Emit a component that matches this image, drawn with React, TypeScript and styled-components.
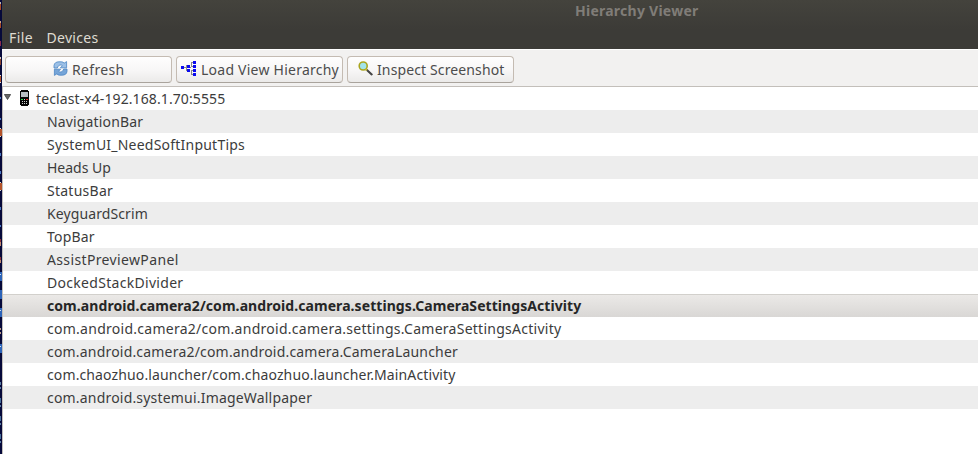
import React from "react";
import styled, { createGlobalStyle } from "styled-components";

const GlobalStyle = createGlobalStyle`
  * { box-sizing: border-box; }
  body {
    margin: 0;
    overflow: hidden;
    font: 14px "Noto Sans", sans-serif;
    color: #3c3c3c;
  }
`;

const Desktop = styled.div`
  display: flex;
  width: 978px;
  height: 454px;
  background: #fff;
`;

const BackdropEdge = styled.div`
  flex: none;
  width: 2px;
  height: 454px;
  background: #06093a;
  svg { display: block; }
`;

const Window = styled.div`
  flex: 1;
  min-width: 0;
  display: flex;
  flex-direction: column;
`;

const Header = styled.header`
  height: 49px;
  background: linear-gradient(#44433d, #3c3b37 60%);
`;

const Title = styled.div`
  height: 26px;
  padding: 0 0 0 573px;
  line-height: 22px;
  font-weight: 700;
  letter-spacing: 0.25px;
  color: #807d78;
`;

const MenuBar = styled.nav`
  display: flex;
  height: 23px;
  padding-left: 7px;
  gap: 13.5px;
  line-height: 23px;
  color: #dfdbd2;
`;

const Label = styled.span<{ $track: number }>`
  letter-spacing: ${(p) => p.$track}px;
  white-space: nowrap;
`;

const Toolbar = styled.div`
  display: flex;
  height: 38px;
  padding: 6px 0 0 3px;
  gap: 4px;
  background: #f2f1f0;
  border-top: 1px solid #fff;
  border-bottom: 1px solid #c3bfba;
`;

const ToolButton = styled.div<{ $inset: number; $gap: number }>`
  display: flex;
  align-items: center;
  width: 167px;
  height: 27px;
  padding-left: ${(p) => p.$inset}px;
  gap: ${(p) => p.$gap}px;
  border: 1px solid #c4bbb2;
  border-bottom-color: #a9a39c;
  border-radius: 4px;
  background: linear-gradient(#fefefe, #f7f6f6 55%, #ebeae9);
  color: #4c4c4c;
  svg {
    flex: none;
    margin-bottom: 2px;
  }
`;

const Tree = styled.div`
  flex: 1;
  background: #fff;
  border-left: 1px solid #c3bfba;
`;

const DeviceRow = styled.div`
  display: flex;
  align-items: center;
  height: 23px;
  padding-left: 1px;
  svg { flex: none; }
`;

const Arrow = styled.svg`
  margin-top: -3px;
`;

const Phone = styled.svg`
  margin: -1px 6px 0 9px;
`;

const WindowRow = styled.div<{ $track: number; $shaded: boolean; $selected?: boolean }>`
  height: 23px;
  padding-left: 44px;
  line-height: ${(p) => (p.$selected ? 22 : 23)}px;
  letter-spacing: ${(p) => p.$track}px;
  white-space: nowrap;
  background: ${(p) =>
    p.$selected ? "linear-gradient(#ebe9e7, #d9d7d5)" : p.$shaded ? "#ededed" : "#fff"};
  border-top: ${(p) => (p.$selected ? "1px solid #d2d0cc" : "0")};
  font-weight: ${(p) => (p.$selected ? 700 : 400)};
  color: ${(p) => (p.$selected ? "#262626" : "#3c3c3c")};
`;

const windows: { name: string; track: number; selected?: boolean }[] = [
  { name: "NavigationBar", track: 0.15 },
  { name: "SystemUI_NeedSoftInputTips", track: 0.22 },
  { name: "Heads Up", track: 0 },
  { name: "StatusBar", track: 0.26 },
  { name: "KeyguardScrim", track: 0.1 },
  { name: "TopBar", track: 0.2 },
  { name: "AssistPreviewPanel", track: 0.36 },
  { name: "DockedStackDivider", track: 0.3 },
  { name: "com.android.camera2/com.android.camera.settings.CameraSettingsActivity", track: 0.07, selected: true },
  { name: "com.android.camera2/com.android.camera.settings.CameraSettingsActivity", track: 0.265 },
  { name: "com.android.camera2/com.android.camera.CameraLauncher", track: 0.19 },
  { name: "com.chaozhuo.launcher/com.chaozhuo.launcher.MainActivity", track: 0.12 },
  { name: "com.android.systemui.ImageWallpaper", track: 0.19 },
];

// Slivers of the terminal behind the window: [top, height, colour]
const slivers: [number, number, string][] = [
  [2, 2, "#b9b4b4"], [4, 6, "#a64c28"], [21, 2, "#c9a78e"], [23, 5, "#a64c28"],
  [41, 5, "#8a2c50"], [57, 2, "#d5c7bd"], [59, 6, "#8c4630"], [75, 1, "#ddd"],
  [76, 6, "#b4532a"], [82, 1, "#ddd"], [97, 2, "#4c7ac4"], [118, 2, "#4c7ac4"],
  [128, 1, "#ddd"], [129, 7, "#b4532a"], [136, 1, "#ddd"], [153, 3, "#4c7ac4"],
  [171, 3, "#4c7ac4"], [182, 1, "#ddd"], [183, 7, "#b4532a"], [190, 1, "#ddd"],
  [207, 3, "#4c7ac4"], [225, 2, "#4c7ac4"], [239, 3, "#8a3038"], [242, 4, "#c08a70"],
  [257, 3, "#8a3038"], [260, 3, "#c08a70"], [272, 9, "#2c63b8"], [274, 1, "#cfe0f4"],
  [308, 9, "#2c63b8"], [310, 1, "#cfe0f4"], [290, 9, "#2c63b8"], [328, 2, "#b99a88"],
  [332, 2, "#b99a88"], [344, 9, "#2c63b8"], [346, 1, "#cfe0f4"], [382, 3, "#5b7ea6"],
  [387, 2, "#5b7ea6"], [398, 5, "#48709c"], [405, 2, "#5b7ea6"], [416, 5, "#48709c"],
  [423, 2, "#5b7ea6"], [434, 5, "#48709c"], [441, 2, "#5b7ea6"],
];

const RefreshIcon = () => (
  <svg width="15" height="15" viewBox="0 0 15 15">
    <path d="M1 7V4.6C1.3 2 3.2.8 6 .8h2.2c1.2 0 2.2.5 3 1.3L13.6.6v6.2H7.4l2-2.1C8.600 3.700 5.300 3.300 4.300 7z" fill="#9cc0e6" stroke="#4d86c4" strokeWidth=".8" />
    <path d="M14 8v2.400c-.3 2.600-2.200 3.800-5 3.800H6.800c-1.200 0-2.200-.5-3-1.300L1.400 14.400V8.200h6.200l-2 2.100c.8 1 4.100 1.400 5.100-2.300z" fill="#76a5d8" stroke="#4d86c4" strokeWidth=".8" />
  </svg>
);

const HierarchyIcon = () => (
  <svg width="16" height="16" viewBox="0 0 16 16" shapeRendering="crispEdges">
    <path d="M3 6.5h7M5.5 4v6M5 9.5h3M10.500 1v5M10 1.500h3M10 5.500h3M10.500 9v5M10 9.500h3M10 13.500h3" stroke="#8b8b8b" fill="none" />
    <path d="M0 5h3v3H0zM6 4h3v3H6zM6 8h3v3H6zM12 0h3v3h-3zM12 4h3v3h-3zM12 8h3v3h-3zM12 12h3v3h-3z" fill="#0b0bf0" />
  </svg>
);

const InspectIcon = () => (
  <svg width="15" height="15" viewBox="0 0 15 15">
    <path d="M8.400 8.400l5.300 5" stroke="#444" strokeWidth="2.100" strokeLinecap="round" />
    <circle cx="5.200" cy="5" r="4" fill="#a2e4ea" stroke="#aaa51f" strokeWidth="1.600" />
    <path d="M7.600 8l1.400 1.300" stroke="#c9bd30" strokeWidth="1.600" />
  </svg>
);

const PhoneIcon = () => (
  <Phone width="10" height="16" viewBox="0 0 10 16" shapeRendering="crispEdges">
    <path d="M1 0h7v1h1v14H8v1H1v-1H0V1h1z" fill="#080808" />
    <path d="M1 2h7v5H1z" fill="#b7bec3" />
    <path d="M1 9h2v1H1z" fill="#1ee04b" />
    <path d="M6 9h2v1H6z" fill="#f02a2a" />
    <path d="M4 9h1v1H4zM2 11h1v1H2zM4 11h1v1H4zM6 11h1v1H6zM2 13h1v1H2zM4 13h1v1H4zM6 13h1v1H6z" fill="#d4d4d4" />
  </Phone>
);

export default function App() {
  return (
    <>
      <GlobalStyle />
      <Desktop>
        <BackdropEdge>
          <svg width="2" height="454" shapeRendering="crispEdges">
            {slivers.map(([y, h, fill]) => (
              <rect key={y} x="0" y={y} width={h > 6 ? 2 : 1} height={h} fill={fill} />
            ))}
          </svg>
        </BackdropEdge>
        <Window>
          <Header>
            <Title>Hierarchy Viewer</Title>
            <MenuBar>
              <Label $track={0.4}>File</Label>
              <Label $track={0.3}>Devices</Label>
            </MenuBar>
          </Header>
          <Toolbar>
            <ToolButton $inset={47} $gap={4}>
              <RefreshIcon />
              <Label $track={0.35}>Refresh</Label>
            </ToolButton>
            <ToolButton $inset={4} $gap={4}>
              <HierarchyIcon />
              <Label $track={0.24}>Load View Hierarchy</Label>
            </ToolButton>
            <ToolButton $inset={10} $gap={4}>
              <InspectIcon />
              <Label $track={0.12}>Inspect Screenshot</Label>
            </ToolButton>
          </Toolbar>
          <Tree>
            <DeviceRow>
              <Arrow width="7" height="6" viewBox="0 0 7 6">
                <path d="M.4.5h6.200L3.500 5.500z" fill="#666" stroke="#3c3c3c" strokeWidth=".8" />
              </Arrow>
              <PhoneIcon />
              <Label $track={0.1}>teclast-x4-192.168.1.70:5555</Label>
            </DeviceRow>
            {windows.map((w, i) => (
              <WindowRow key={i} $track={w.track} $shaded={i % 2 === 0} $selected={w.selected}>
                {w.name}
              </WindowRow>
            ))}
          </Tree>
        </Window>
      </Desktop>
    </>
  );
}
